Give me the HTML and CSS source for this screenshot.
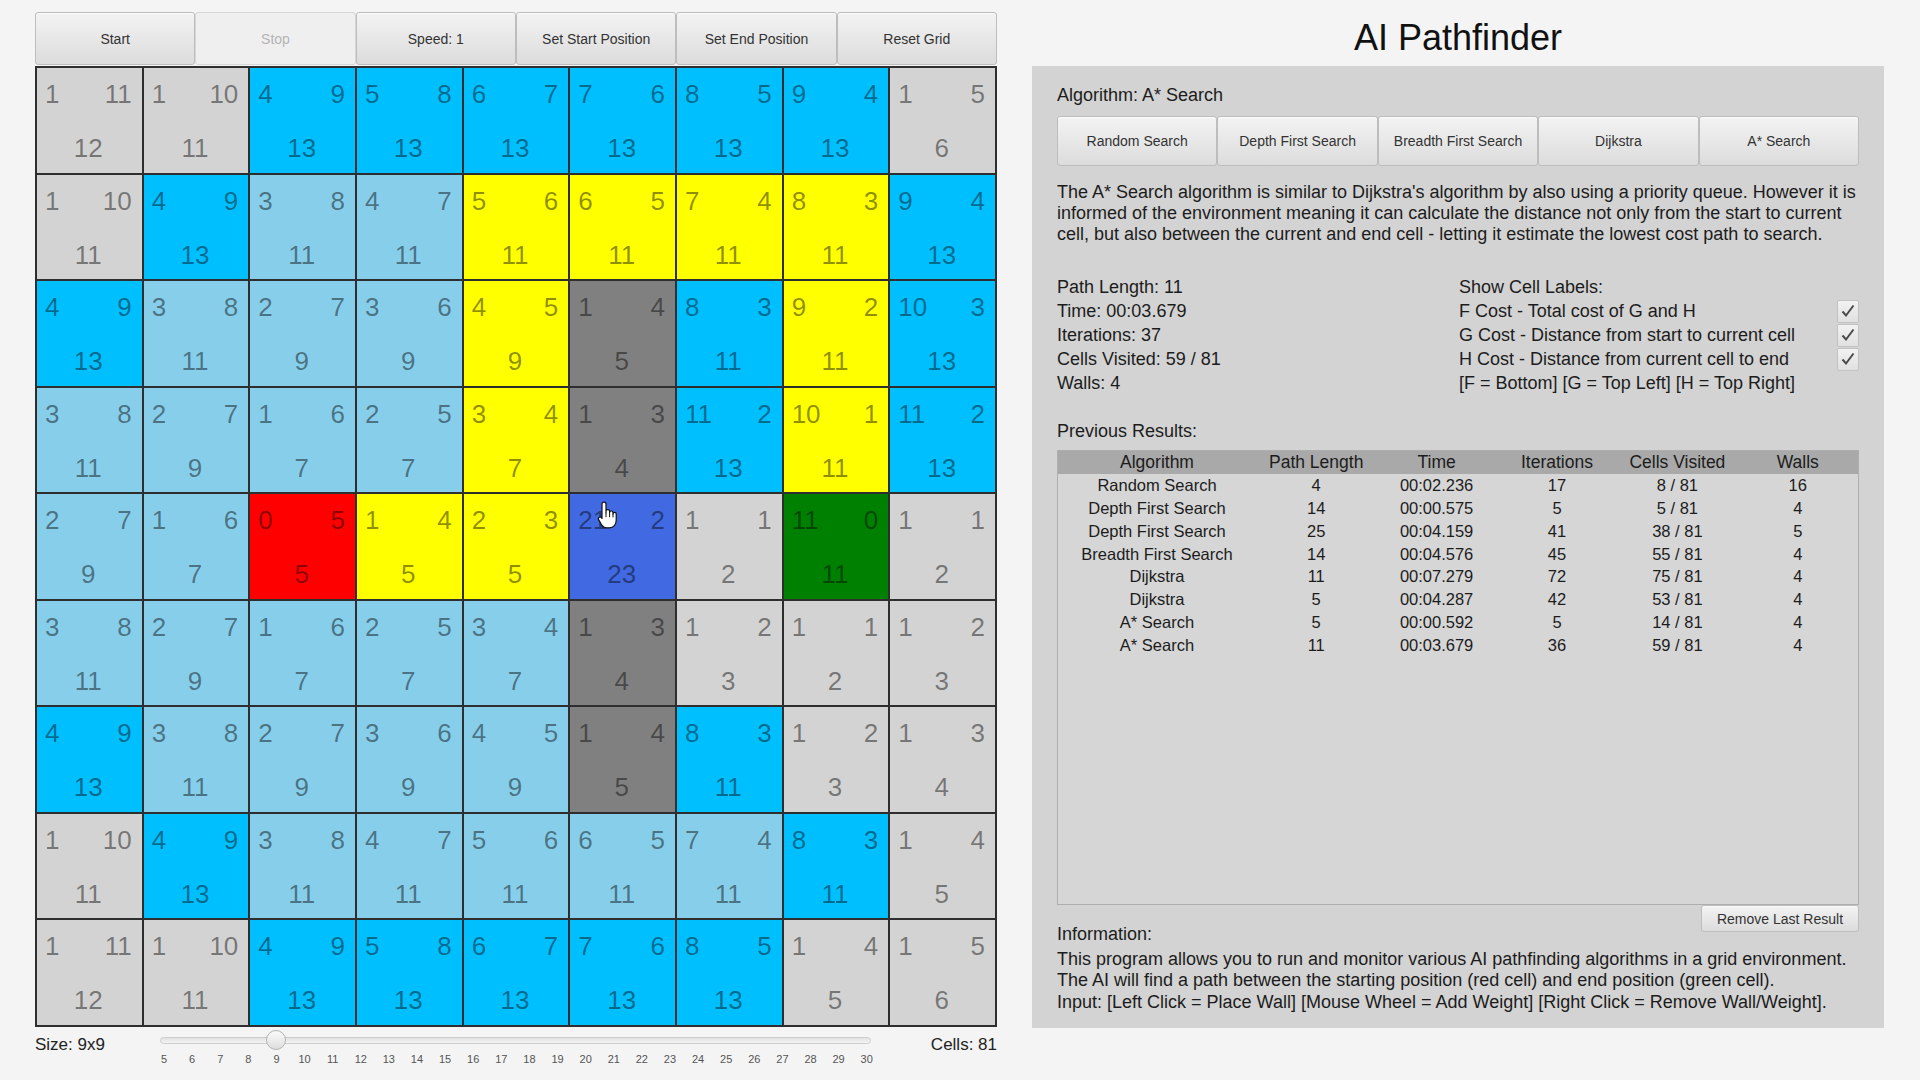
FILE: index.html
```html
<!DOCTYPE html>
<html>
<head>
<meta charset="utf-8">
<title>AI Pathfinder</title>
<link rel="stylesheet" href="styles.css">
</head>
<body>
<div class="app">
  <div class="left">
    <div class="toolbar">
      <div class="btn">Start</div>
      <div class="btn disabled">Stop</div>
      <div class="btn">Speed: 1</div>
      <div class="btn">Set Start Position</div>
      <div class="btn">Set End Position</div>
      <div class="btn">Reset Grid</div>
    </div>
    <div class="grid">
      <div class="cell g"><div class="gh"><span>1</span><span>11</span></div><div class="f">12</div></div>
      <div class="cell g"><div class="gh"><span>1</span><span>10</span></div><div class="f">11</div></div>
      <div class="cell c"><div class="gh"><span>4</span><span>9</span></div><div class="f">13</div></div>
      <div class="cell c"><div class="gh"><span>5</span><span>8</span></div><div class="f">13</div></div>
      <div class="cell c"><div class="gh"><span>6</span><span>7</span></div><div class="f">13</div></div>
      <div class="cell c"><div class="gh"><span>7</span><span>6</span></div><div class="f">13</div></div>
      <div class="cell c"><div class="gh"><span>8</span><span>5</span></div><div class="f">13</div></div>
      <div class="cell c"><div class="gh"><span>9</span><span>4</span></div><div class="f">13</div></div>
      <div class="cell g"><div class="gh"><span>1</span><span>5</span></div><div class="f">6</div></div>

      <div class="cell g"><div class="gh"><span>1</span><span>10</span></div><div class="f">11</div></div>
      <div class="cell c"><div class="gh"><span>4</span><span>9</span></div><div class="f">13</div></div>
      <div class="cell l"><div class="gh"><span>3</span><span>8</span></div><div class="f">11</div></div>
      <div class="cell l"><div class="gh"><span>4</span><span>7</span></div><div class="f">11</div></div>
      <div class="cell y"><div class="gh"><span>5</span><span>6</span></div><div class="f">11</div></div>
      <div class="cell y"><div class="gh"><span>6</span><span>5</span></div><div class="f">11</div></div>
      <div class="cell y"><div class="gh"><span>7</span><span>4</span></div><div class="f">11</div></div>
      <div class="cell y"><div class="gh"><span>8</span><span>3</span></div><div class="f">11</div></div>
      <div class="cell c"><div class="gh"><span>9</span><span>4</span></div><div class="f">13</div></div>

      <div class="cell c"><div class="gh"><span>4</span><span>9</span></div><div class="f">13</div></div>
      <div class="cell l"><div class="gh"><span>3</span><span>8</span></div><div class="f">11</div></div>
      <div class="cell l"><div class="gh"><span>2</span><span>7</span></div><div class="f">9</div></div>
      <div class="cell l"><div class="gh"><span>3</span><span>6</span></div><div class="f">9</div></div>
      <div class="cell y"><div class="gh"><span>4</span><span>5</span></div><div class="f">9</div></div>
      <div class="cell w"><div class="gh"><span>1</span><span>4</span></div><div class="f">5</div></div>
      <div class="cell c"><div class="gh"><span>8</span><span>3</span></div><div class="f">11</div></div>
      <div class="cell y"><div class="gh"><span>9</span><span>2</span></div><div class="f">11</div></div>
      <div class="cell c"><div class="gh"><span>10</span><span>3</span></div><div class="f">13</div></div>

      <div class="cell l"><div class="gh"><span>3</span><span>8</span></div><div class="f">11</div></div>
      <div class="cell l"><div class="gh"><span>2</span><span>7</span></div><div class="f">9</div></div>
      <div class="cell l"><div class="gh"><span>1</span><span>6</span></div><div class="f">7</div></div>
      <div class="cell l"><div class="gh"><span>2</span><span>5</span></div><div class="f">7</div></div>
      <div class="cell y"><div class="gh"><span>3</span><span>4</span></div><div class="f">7</div></div>
      <div class="cell w"><div class="gh"><span>1</span><span>3</span></div><div class="f">4</div></div>
      <div class="cell c"><div class="gh"><span>11</span><span>2</span></div><div class="f">13</div></div>
      <div class="cell y"><div class="gh"><span>10</span><span>1</span></div><div class="f">11</div></div>
      <div class="cell c"><div class="gh"><span>11</span><span>2</span></div><div class="f">13</div></div>

      <div class="cell l"><div class="gh"><span>2</span><span>7</span></div><div class="f">9</div></div>
      <div class="cell l"><div class="gh"><span>1</span><span>6</span></div><div class="f">7</div></div>
      <div class="cell r"><div class="gh"><span>0</span><span>5</span></div><div class="f">5</div></div>
      <div class="cell y"><div class="gh"><span>1</span><span>4</span></div><div class="f">5</div></div>
      <div class="cell y"><div class="gh"><span>2</span><span>3</span></div><div class="f">5</div></div>
      <div class="cell b"><div class="gh"><span>21</span><span>2</span></div><div class="f">23</div>
        <svg class="cursor" width="22" height="29" viewBox="0 0 22 29"><path d="M7 1.2c1.1 0 2 .8 2 2v8.6V10.3c0-1 .8-1.7 1.8-1.7s1.8.8 1.8 1.7v1.3c0-1 .8-1.6 1.7-1.6s1.7.7 1.7 1.7v1.2c0-.9.8-1.5 1.6-1.5.9 0 1.6.7 1.6 1.6v6.2c0 4.200-2.6 7.6-6.6 7.6h-2.7c-2.5 0-4-1.1-5.300-3L1.6 18.6c-.5-.9-.2-2 .7-2.400.8-.4 1.8-.1 2.300.6l.4.6V3.2c0-1.2.9-2 2-2z" fill="#fff" stroke="#111" stroke-width="1.2" stroke-linejoin="round"/><path d="M9 11.8v4.4M12.6 11.6v4.6M16 12.6v3.8" stroke="#111" stroke-width="1"/></svg>
      </div>
      <div class="cell g"><div class="gh"><span>1</span><span>1</span></div><div class="f">2</div></div>
      <div class="cell gr"><div class="gh"><span>11</span><span>0</span></div><div class="f">11</div></div>
      <div class="cell g"><div class="gh"><span>1</span><span>1</span></div><div class="f">2</div></div>

      <div class="cell l"><div class="gh"><span>3</span><span>8</span></div><div class="f">11</div></div>
      <div class="cell l"><div class="gh"><span>2</span><span>7</span></div><div class="f">9</div></div>
      <div class="cell l"><div class="gh"><span>1</span><span>6</span></div><div class="f">7</div></div>
      <div class="cell l"><div class="gh"><span>2</span><span>5</span></div><div class="f">7</div></div>
      <div class="cell l"><div class="gh"><span>3</span><span>4</span></div><div class="f">7</div></div>
      <div class="cell w"><div class="gh"><span>1</span><span>3</span></div><div class="f">4</div></div>
      <div class="cell g"><div class="gh"><span>1</span><span>2</span></div><div class="f">3</div></div>
      <div class="cell g"><div class="gh"><span>1</span><span>1</span></div><div class="f">2</div></div>
      <div class="cell g"><div class="gh"><span>1</span><span>2</span></div><div class="f">3</div></div>

      <div class="cell c"><div class="gh"><span>4</span><span>9</span></div><div class="f">13</div></div>
      <div class="cell l"><div class="gh"><span>3</span><span>8</span></div><div class="f">11</div></div>
      <div class="cell l"><div class="gh"><span>2</span><span>7</span></div><div class="f">9</div></div>
      <div class="cell l"><div class="gh"><span>3</span><span>6</span></div><div class="f">9</div></div>
      <div class="cell l"><div class="gh"><span>4</span><span>5</span></div><div class="f">9</div></div>
      <div class="cell w"><div class="gh"><span>1</span><span>4</span></div><div class="f">5</div></div>
      <div class="cell c"><div class="gh"><span>8</span><span>3</span></div><div class="f">11</div></div>
      <div class="cell g"><div class="gh"><span>1</span><span>2</span></div><div class="f">3</div></div>
      <div class="cell g"><div class="gh"><span>1</span><span>3</span></div><div class="f">4</div></div>

      <div class="cell g"><div class="gh"><span>1</span><span>10</span></div><div class="f">11</div></div>
      <div class="cell c"><div class="gh"><span>4</span><span>9</span></div><div class="f">13</div></div>
      <div class="cell l"><div class="gh"><span>3</span><span>8</span></div><div class="f">11</div></div>
      <div class="cell l"><div class="gh"><span>4</span><span>7</span></div><div class="f">11</div></div>
      <div class="cell l"><div class="gh"><span>5</span><span>6</span></div><div class="f">11</div></div>
      <div class="cell l"><div class="gh"><span>6</span><span>5</span></div><div class="f">11</div></div>
      <div class="cell l"><div class="gh"><span>7</span><span>4</span></div><div class="f">11</div></div>
      <div class="cell c"><div class="gh"><span>8</span><span>3</span></div><div class="f">11</div></div>
      <div class="cell g"><div class="gh"><span>1</span><span>4</span></div><div class="f">5</div></div>

      <div class="cell g"><div class="gh"><span>1</span><span>11</span></div><div class="f">12</div></div>
      <div class="cell g"><div class="gh"><span>1</span><span>10</span></div><div class="f">11</div></div>
      <div class="cell c"><div class="gh"><span>4</span><span>9</span></div><div class="f">13</div></div>
      <div class="cell c"><div class="gh"><span>5</span><span>8</span></div><div class="f">13</div></div>
      <div class="cell c"><div class="gh"><span>6</span><span>7</span></div><div class="f">13</div></div>
      <div class="cell c"><div class="gh"><span>7</span><span>6</span></div><div class="f">13</div></div>
      <div class="cell c"><div class="gh"><span>8</span><span>5</span></div><div class="f">13</div></div>
      <div class="cell g"><div class="gh"><span>1</span><span>4</span></div><div class="f">5</div></div>
      <div class="cell g"><div class="gh"><span>1</span><span>5</span></div><div class="f">6</div></div>
    </div>
    <div class="sizebar">
      <div class="size-label">Size: 9x9</div>
      <div class="slider">
        <div class="track"></div>
        <div class="thumb" style="left:106px"></div>
        <div class="ticks">
          <span>5</span><span>6</span><span>7</span><span>8</span><span>9</span><span>10</span><span>11</span><span>12</span><span>13</span><span>14</span><span>15</span><span>16</span><span>17</span><span>18</span><span>19</span><span>20</span><span>21</span><span>22</span><span>23</span><span>24</span><span>25</span><span>26</span><span>27</span><span>28</span><span>29</span><span>30</span>
        </div>
      </div>
      <div class="cells-label">Cells: 81</div>
    </div>
  </div>

  <div class="right">
    <h1 class="title">AI Pathfinder</h1>
    <div class="panel">
      <div class="alg-label">Algorithm: A* Search</div>
      <div class="alg-buttons">
        <div class="btn">Random Search</div>
        <div class="btn">Depth First Search</div>
        <div class="btn">Breadth First Search</div>
        <div class="btn">Dijkstra</div>
        <div class="btn">A* Search</div>
      </div>
      <p class="desc">The A* Search algorithm is similar to Dijkstra's algorithm by also using a priority queue. However it is<br>informed of the environment meaning it can calculate the distance not only from the start to current<br>cell, but also between the current and end cell - letting it estimate the lowest cost path to search.</p>
      <div class="stats">
        <div class="stat-col">
          <div>Path Length: 11</div>
          <div>Time: 00:03.679</div>
          <div>Iterations: 37</div>
          <div>Cells Visited: 59 / 81</div>
          <div>Walls: 4</div>
        </div>
        <div class="stat-col">
          <div>Show Cell Labels:</div>
          <div class="lbl-row"><span>F Cost - Total cost of G and H</span><span class="chk"><svg width="16" height="16" viewBox="0 0 16 16"><polyline points="2.5,8.5 6,12.5 13.5,2.5" fill="none" stroke="#4a4a4a" stroke-width="2"/></svg></span></div>
          <div class="lbl-row"><span>G Cost - Distance from start to current cell</span><span class="chk"><svg width="16" height="16" viewBox="0 0 16 16"><polyline points="2.5,8.5 6,12.5 13.5,2.5" fill="none" stroke="#4a4a4a" stroke-width="2"/></svg></span></div>
          <div class="lbl-row"><span>H Cost - Distance from current cell to end</span><span class="chk"><svg width="16" height="16" viewBox="0 0 16 16"><polyline points="2.5,8.5 6,12.5 13.5,2.5" fill="none" stroke="#4a4a4a" stroke-width="2"/></svg></span></div>
          <div>[F = Bottom] [G = Top Left] [H = Top Right]</div>
        </div>
      </div>
      <div class="prev-label">Previous Results:</div>
      <div class="results">
        <table>
          <colgroup><col class="c-alg"><col><col><col><col><col></colgroup>
          <thead>
            <tr><th>Algorithm</th><th>Path Length</th><th>Time</th><th>Iterations</th><th>Cells Visited</th><th>Walls</th></tr>
          </thead>
          <tbody>
            <tr><td>Random Search</td><td>4</td><td>00:02.236</td><td>17</td><td>8 / 81</td><td>16</td></tr>
            <tr><td>Depth First Search</td><td>14</td><td>00:00.575</td><td>5</td><td>5 / 81</td><td>4</td></tr>
            <tr><td>Depth First Search</td><td>25</td><td>00:04.159</td><td>41</td><td>38 / 81</td><td>5</td></tr>
            <tr><td>Breadth First Search</td><td>14</td><td>00:04.576</td><td>45</td><td>55 / 81</td><td>4</td></tr>
            <tr><td>Dijkstra</td><td>11</td><td>00:07.279</td><td>72</td><td>75 / 81</td><td>4</td></tr>
            <tr><td>Dijkstra</td><td>5</td><td>00:04.287</td><td>42</td><td>53 / 81</td><td>4</td></tr>
            <tr><td>A* Search</td><td>5</td><td>00:00.592</td><td>5</td><td>14 / 81</td><td>4</td></tr>
            <tr><td>A* Search</td><td>11</td><td>00:03.679</td><td>36</td><td>59 / 81</td><td>4</td></tr>
          </tbody>
        </table>
      </div>
      <div class="info-row">
        <div class="info-label">Information:</div>
        <div class="btn small">Remove Last Result</div>
      </div>
      <p class="info">This program allows you to run and monitor various AI pathfinding algorithms in a grid environment.<br>The AI will find a path between the starting position (red cell) and end position (green cell).<br>Input: [Left Click = Place Wall] [Mouse Wheel = Add Weight] [Right Click = Remove Wall/Weight].</p>
    </div>
  </div>
</div>
</body>
</html>
```

FILE: styles.css
```css
* { box-sizing: border-box; }

body {
  margin: 0;
  width: 1920px;
  height: 1080px;
  overflow: hidden;
  background: #f4f4f4;
  font-family: "Liberation Sans", Arial, sans-serif;
  color: #1c1c1c;
}

.app {
  display: flex;
  gap: 35px;
  padding-left: 35px;
}

/* ---------- left column ---------- */
.left {
  width: 962px;
  padding-top: 12px;
}

.toolbar {
  display: flex;
  height: 53px;
  margin-bottom: 1px;
}

.btn {
  flex: 1;
  display: flex;
  align-items: center;
  justify-content: center;
  border: 1px solid #bdbdbd;
  border-radius: 3px;
  background: linear-gradient(#f3f3f3, #dcdcdc);
  box-shadow: inset 0 1px 0 #fbfbfb;
  font-size: 14px;
  color: #333;
  white-space: nowrap;
}

.btn.disabled {
  background: #efefef;
  border-color: #d6d6d6;
  box-shadow: none;
  color: #b4b4b4;
}

.grid {
  width: 962px;
  height: 961px;
  display: grid;
  grid-template-columns: repeat(9, 1fr);
  grid-template-rows: repeat(9, 1fr);
  border: 1px solid #2e2e2e;
}

.cell {
  position: relative;
  min-width: 0;
  min-height: 0;
  border: 1px solid #2e2e2e;
  display: flex;
  flex-direction: column;
  padding: 13px 10px 0 8px;
  font-size: 26px;
  color: rgba(0, 0, 0, 0.45);
}

.gh {
  display: flex;
  justify-content: space-between;
  line-height: 26px;
}

.f {
  margin-top: 28px;
  text-align: center;
  line-height: 26px;
}

.g { background: #d3d3d3; }
.c { background: #00bfff; }
.l { background: #87ceeb; }
.y { background: #ffff00; }
.w { background: #808080; }
.r { background: #ff0000; }
.gr { background: #008000; }
.b { background: #4169e1; }

.cursor {
  position: absolute;
  left: 27px;
  top: 7px;
}

.sizebar {
  display: flex;
  align-items: flex-start;
  margin-top: 6px;
  font-size: 17px;
  color: #222;
}

.size-label {
  width: 125px;
  line-height: 24px;
}

.cells-label {
  flex: 1;
  text-align: right;
  line-height: 24px;
}

.slider {
  position: relative;
  width: 711px;
  padding-top: 4px;
}

.track {
  height: 7px;
  border: 1px solid #cdcdcd;
  border-radius: 4px;
  background: linear-gradient(#e2e2e2, #f4f4f4);
}

.thumb {
  position: absolute;
  top: -3px;
  width: 20px;
  height: 20px;
  border-radius: 50%;
  border: 1px solid #b3b3b3;
  background: linear-gradient(#fafafa, #dedede);
}

.ticks {
  display: flex;
  justify-content: space-between;
  margin: 8px -6px 0 -6px;
  font-size: 11px;
  line-height: 14px;
  color: #555;
}

.ticks span {
  width: 20px;
  text-align: center;
}

/* ---------- right column ---------- */
.right {
  width: 852px;
}

.title {
  margin: 17px 0 8px;
  font-size: 36px;
  line-height: 41px;
  font-weight: normal;
  text-align: center;
  color: #111;
}

.panel {
  height: 962px;
  background: #d3d3d3;
  padding: 19px 25px 0 25px;
  font-size: 18px;
}

.alg-label {
  line-height: 21px;
}

.alg-buttons {
  display: flex;
  height: 50px;
  margin-top: 10px;
}

.desc {
  margin: 16px 0 0;
  line-height: 20.8px;
  white-space: nowrap;
}

.stats {
  display: grid;
  grid-template-columns: 402px 1fr;
  margin-top: 31px;
  line-height: 24px;
}

.lbl-row {
  display: flex;
  justify-content: space-between;
  align-items: center;
  height: 24px;
}

.chk {
  width: 22px;
  height: 23px;
  display: flex;
  align-items: center;
  justify-content: center;
  border: 1px solid #c2c2c2;
  border-radius: 2px;
  background: linear-gradient(#f2f2f2, #e0e0e0);
}

.prev-label {
  margin-top: 24px;
  line-height: 24px;
}

.results {
  height: 455px;
  margin-top: 7px;
  border: 1px solid #aeaeae;
  background: #d6d6d6;
}

.results table {
  width: 100%;
  border-collapse: collapse;
  table-layout: fixed;
}

.results col.c-alg { width: 198px; }

.results th {
  height: 23px;
  padding: 0;
  background: #a9a9a9;
  font-weight: normal;
  font-size: 17.5px;
  color: #1c1c1c;
}

.results td {
  height: 22.75px;
  padding: 0;
  text-align: center;
  font-size: 16.5px;
  color: #1c1c1c;
}

.info-row {
  display: flex;
  justify-content: space-between;
  align-items: flex-start;
  margin-top: 0;
}

.info-label {
  margin-top: 19px;
  line-height: 21.5px;
}

.btn.small {
  flex: none;
  width: 158px;
  height: 27px;
  font-size: 14px;
}

.info {
  margin: 3px 0 0;
  line-height: 21.5px;
  white-space: nowrap;
}
```
